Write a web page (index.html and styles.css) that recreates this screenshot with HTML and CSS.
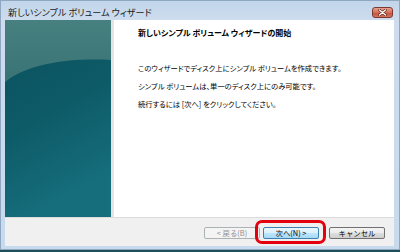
FILE: index.html
```html
<!DOCTYPE html>
<html lang="ja">
<head>
    <meta charset="UTF-8">
    <title>新しいシンプル ボリューム ウィザード</title>
    <link rel="stylesheet" href="styles.css">
</head>
<body>
    <div class="window">
        <div class="titlebar">
            <span class="title">新しいシンプル ボリューム ウィザード</span>
            <button class="close" aria-label="閉じる">
                <svg width="9" height="7" viewBox="0 0 9 7">
                    <path d="M1.5 1 L7.5 6 M7.5 1 L1.5 6" stroke="#5a2418" stroke-width="2.6" stroke-linecap="round"/>
                    <path d="M1.5 1 L7.5 6 M7.5 1 L1.5 6" stroke="#fff" stroke-width="1.4" stroke-linecap="round"/>
                </svg>
            </button>
        </div>

        <div class="client">
            <div class="main">
                <div class="banner">
                    <svg width="106" height="197" viewBox="0 0 106 197" preserveAspectRatio="none">
                        <defs>
                            <linearGradient id="deep" x1="0" y1="0" x2="0.3" y2="1">
                                <stop offset="0" stop-color="#0a505c"/>
                                <stop offset="0.55" stop-color="#0e5b68"/>
                                <stop offset="1" stop-color="#166e7c"/>
                            </linearGradient>
                            <linearGradient id="gloss" x1="0" y1="0" x2="0" y2="1">
                                <stop offset="0" stop-color="#47807f"/>
                                <stop offset="1" stop-color="#397375"/>
                            </linearGradient>
                        </defs>
                        <rect width="106" height="197" fill="url(#deep)"/>
                        <path d="M0 0 H106 V40 C70 38 25 42 0 62 Z" fill="url(#gloss)"/>
                    </svg>
                </div>
                <div class="content">
                    <h1>新しいシンプル ボリューム ウィザードの開始</h1>
                    <p class="first">このウィザードでディスク上にシンプル ボリュームを作成できます。</p>
                    <p>シンプル ボリュームは、単一のディスク上にのみ可能です。</p>
                    <p>続行するには [次へ] をクリックしてください。</p>
                </div>
            </div>
            <div class="footer">
                <button class="btn" disabled>&lt; 戻る(B)</button>
                <button class="btn next">次へ(N) &gt;</button>
                <button class="btn cancel">キャンセル</button>
            </div>
        </div>
        <div class="frame-bottom"></div>
    </div>
</body>
</html>
```

FILE: styles.css
```css
html, body {
    margin: 0;
    padding: 0;
}

body {
    width: 400px;
    height: 252px;
    overflow: hidden;
    background-color: #1d4f5a;
    font-family: "Noto Sans CJK JP", sans-serif;
    font-feature-settings: "palt";
    color: #000;
}

.window {
    width: 400px;
    height: 250px;
    background: linear-gradient(to bottom, #c1d5ea 0px, #cddcee 20px, #c7daee 100%);
    box-shadow: inset 0 0 0 1px #8fa7c0;
}

.titlebar {
    height: 20px;
    display: flex;
    align-items: flex-start;
    justify-content: space-between;
    padding: 0 7px 0 8px;
}

.title {
    font-size: 9.1px;
    line-height: 12px;
    margin-top: 6px;
    color: #1b1b1b;
}

.close {
    width: 21px;
    height: 11px;
    margin-top: 7px;
    padding: 0;
    border: 1px solid #7c3a30;
    border-radius: 3px;
    background: linear-gradient(to bottom, #e8a190 0%, #d66f58 50%, #c4503a 51%, #d3755c 100%);
    display: flex;
    align-items: center;
    justify-content: center;
}

.client {
    margin: 0 6px 0 5px;
    height: 226px;
    display: flex;
    flex-direction: column;
}

.main {
    height: 197px;
    display: flex;
    background-color: #fff;
}

.banner {
    width: 106px;
    height: 197px;
    flex-shrink: 0;
}

.banner svg {
    display: block;
}

.content {
    flex: 1;
    border-left: 3px solid #e4e4e4;
    padding: 7px 0 0 24px;
}

.content h1 {
    font-size: 8px;
    font-weight: bold;
    margin: 0;
    line-height: 12px;
}

.content p {
    font-size: 7.3px;
    line-height: 12px;
    margin: 6px 0 0 0;
}

.content p.first {
    margin-top: 23px;
}

.footer {
    flex: 1;
    background-color: #f0f0f0;
    border-top: 1px solid #dcdcdc;
    display: flex;
    justify-content: flex-end;
    align-items: flex-start;
    padding: 9px 9px 0 0;
}

.btn {
    position: relative;
    width: 56px;
    height: 12px;
    padding: 0;
    margin-left: 3px;
    border: 1px solid #707070;
    border-radius: 2px;
    background: linear-gradient(to bottom, #f3f3f3 0%, #ebebeb 50%, #dddddd 51%, #cfcfcf 100%);
    font-family: inherit;
    font-size: 7.4px;
    line-height: 10px;
    color: #000;
}

.btn:disabled {
    border-color: #adb2b5;
    background: #f4f4f4;
    color: #8f8f8f;
}

.btn.next {
    border-color: #3c7fb1;
    background: linear-gradient(to bottom, #eaf6fd 0%, #d9f0fc 50%, #bee6fd 51%, #a7d9f5 100%);
}

.btn.next::after {
    content: "";
    position: absolute;
    left: -9px;
    right: -8px;
    top: -8px;
    bottom: -6px;
    border: 3px solid #e4000f;
    border-radius: 7px;
}

.btn.cancel {
    margin-left: 10px;
}

.frame-bottom {
    height: 4px;
}
```
